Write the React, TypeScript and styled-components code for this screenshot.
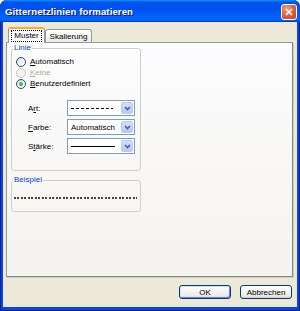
import styled, { createGlobalStyle } from "styled-components";

const GlobalStyle = createGlobalStyle`
  html, body {
    margin: 0;
    padding: 0;
    background: #ffffff;
  }
  body {
    width: 300px;
    height: 311px;
    overflow: hidden;
    font-family: "Liberation Sans", Arial, sans-serif;
    font-size: 8px;
    color: #000000;
  }
`;

const Window = styled.div`
  width: 300px;
  height: 311px;
  display: flex;
  flex-direction: column;
  background: #0a47d8;
  border-radius: 7px 7px 0 0;
  overflow: hidden;
  box-shadow: inset 1px 0 #00209c, inset -1px 0 #00209c, inset 0 -1px #00209c;
`;

const TitleBar = styled.div`
  height: 22px;
  flex: none;
  display: flex;
  align-items: center;
  justify-content: space-between;
  padding: 0 3px 0 5px;
  background: linear-gradient(
    to bottom,
    #0997ff 0%,
    #0053ee 10%,
    #0050ee 40%,
    #0066ff 86%,
    #0066ff 91%,
    #005bff 94%,
    #003dd7 97%,
    #003dd7 100%
  );
`;

const Title = styled.span`
  color: #ffffff;
  font-weight: bold;
  font-size: 9.6px;
  text-shadow: 1px 1px #0f1089;
  letter-spacing: 0.1px;
`;

const CloseButton = styled.div`
  width: 14px;
  height: 14px;
  margin-top: 1px;
  border: 1px solid #ffffff;
  border-radius: 3px;
  display: flex;
  align-items: center;
  justify-content: center;
  background: radial-gradient(circle at 35% 30%, #f0a48c 0%, #e0673f 45%, #c2401f 100%);
`;

const Body = styled.div`
  flex: 1;
  margin: 0 3px 4px 3px;
  padding: 5px 4px 0 3px;
  background: #ece9d8;
  display: flex;
  flex-direction: column;
`;

const TabStrip = styled.div`
  height: 16px;
  display: flex;
  align-items: flex-end;
  padding-left: 2px;
  margin-bottom: -1px;
  position: relative;
  z-index: 1;
`;

const Tab = styled.div<{ $active?: boolean }>`
  box-sizing: border-box;
  height: ${(p) => (p.$active ? "16px" : "13px")};
  width: ${(p) => (p.$active ? "37px" : "47px")};
  margin-bottom: ${(p) => (p.$active ? "0" : "1px")};
  margin-left: ${(p) => (p.$active ? "0" : "0")};
  border: 1px solid #919b9c;
  border-bottom: none;
  border-top: ${(p) => (p.$active ? "2px solid #f7a935" : "1px solid #919b9c")};
  border-radius: 3px 3px 0 0;
  background: ${(p) =>
    p.$active ? "#fcfcfe" : "linear-gradient(to bottom, #ffffff, #eceae3)"};
  display: flex;
  align-items: center;
  justify-content: center;
  padding-bottom: ${(p) => (p.$active ? "1px" : "0")};
`;

const FocusText = styled.span`
  outline: 1px dotted #000000;
  outline-offset: 1px;
  padding: 0 1px;
  line-height: 8px;
`;

const Panel = styled.div`
  box-sizing: border-box;
  height: 235px;
  border: 1px solid #919b9c;
  border-right-color: #7f8a8b;
  border-bottom-color: #7f8a8b;
  box-shadow: 1px 1px 0 #d0cec0;
  background: linear-gradient(to bottom, #fcfcfe, #f4f3ee);
  padding: 0 4px;
  display: flex;
  flex-direction: column;
`;

const Group = styled.fieldset<{ $gap?: number }>`
  box-sizing: border-box;
  width: 130px;
  margin: ${(p) => p.$gap ?? 0}px 0 0 0;
  padding: 0 1px;
  border: 1px solid #d0d0bf;
  border-radius: 3px;
  min-width: 0;
`;

const Legend = styled.legend`
  color: #0046d5;
  padding: 0 1px;
  line-height: 10px;
  font-size: 8px;
`;

const RadioList = styled.div`
  display: flex;
  flex-direction: column;
  padding: 3px 0 0 3px;
`;

const RadioRow = styled.div<{ $disabled?: boolean }>`
  height: 11px;
  display: flex;
  align-items: center;
  gap: 4px;
  color: ${(p) => (p.$disabled ? "#aca899" : "#000000")};
`;

const RadioCircle = styled.span<{ $checked?: boolean; $disabled?: boolean }>`
  box-sizing: border-box;
  width: 10px;
  height: 10px;
  border-radius: 50%;
  border: 1px solid ${(p) => (p.$disabled ? "#cac8bb" : "#1c5180")};
  background: ${(p) =>
    p.$disabled
      ? "#f4f3ee"
      : "linear-gradient(135deg, #dcd9ce 0%, #f4f3ee 50%, #ffffff 100%)"};
  display: flex;
  align-items: center;
  justify-content: center;

  &::after {
    content: "";
    display: ${(p) => (p.$checked ? "block" : "none")};
    width: 4px;
    height: 4px;
    border-radius: 50%;
    background: radial-gradient(circle at 40% 40%, #55d155, #1e8f1e);
  }
`;

const Fields = styled.div`
  display: flex;
  flex-direction: column;
  gap: 3px;
  padding: 11px 0 16px 15px;
`;

const FieldRow = styled.div`
  height: 16px;
  display: flex;
  align-items: center;
`;

const FieldLabel = styled.span`
  width: 39px;
`;

const Combo = styled.div`
  box-sizing: border-box;
  width: 68px;
  height: 16px;
  border: 1px solid #7f9db9;
  background: #ffffff;
  display: flex;
  align-items: stretch;
`;

const ComboValue = styled.div`
  flex: 1;
  display: flex;
  align-items: center;
  padding: 0 3px;
  overflow: hidden;
  white-space: nowrap;
`;

const ComboButton = styled.div`
  width: 12px;
  margin: 1px;
  border: 1px solid #bccbf3;
  border-radius: 2px;
  box-sizing: border-box;
  background: linear-gradient(to bottom, #d2defb, #b5c9f7);
  display: flex;
  align-items: center;
  justify-content: center;
`;

const LineSample = styled.div<{ $kind: "dash" | "solid" }>`
  width: ${(p) => (p.$kind === "dash" ? "42px" : "44px")};
  height: 1px;
  background: ${(p) =>
    p.$kind === "dash"
      ? "repeating-linear-gradient(to right, #000 0 3px, transparent 3px 5px)"
      : "#000000"};
`;

const DottedSample = styled.div`
  height: 2px;
  margin: 12px 2px 12px 1px;
  background: repeating-linear-gradient(to right, #444444 0 2px, transparent 2px 3.5px);
`;

const ButtonRow = styled.div`
  display: flex;
  justify-content: flex-end;
  gap: 9px;
  margin-top: 8px;
  padding-right: 1px;
`;

const Button = styled.div<{ $default?: boolean }>`
  box-sizing: border-box;
  width: 52px;
  height: 14px;
  border: 1px solid #003c74;
  border-radius: 3px;
  background: linear-gradient(to bottom, #ffffff, #ecebe6 80%, #d6d0c5);
  box-shadow: ${(p) =>
    p.$default ? "inset -1px -1px #6982ee, inset 1px 1px #cee7ff" : "none"};
  display: flex;
  align-items: center;
  justify-content: center;
  font-size: 8px;
`;

const Chevron = () => (
  <svg width="7" height="5" viewBox="0 0 7 5">
    <path d="M1 1 L3.5 3.5 L6 1" fill="none" stroke="#4d6185" strokeWidth="1.6" />
  </svg>
);

const CloseX = () => (
  <svg width="8" height="8" viewBox="0 0 8 8">
    <path d="M1 1 L7 7 M7 1 L1 7" stroke="#ffffff" strokeWidth="1.6" />
  </svg>
);

type RadioItem = { label: React.ReactNode; checked?: boolean; disabled?: boolean };

const radios: RadioItem[] = [
  { label: <><u>A</u>utomatisch</> },
  { label: <><u>K</u>eine</>, disabled: true },
  { label: <><u>B</u>enutzerdefiniert</>, checked: true },
];

const App = () => {
  return (
    <>
      <GlobalStyle />
      <Window>
        <TitleBar>
          <Title>Gitternetzlinien formatieren</Title>
          <CloseButton>
            <CloseX />
          </CloseButton>
        </TitleBar>
        <Body>
          <TabStrip>
            <Tab $active>
              <FocusText>Muster</FocusText>
            </Tab>
            <Tab>Skalierung</Tab>
          </TabStrip>
          <Panel>
            <Group>
              <Legend>Linie</Legend>
              <RadioList>
                {radios.map((r, i) => (
                  <RadioRow key={i} $disabled={r.disabled}>
                    <RadioCircle $checked={r.checked} $disabled={r.disabled} />
                    <span>{r.label}</span>
                  </RadioRow>
                ))}
              </RadioList>
              <Fields>
                <FieldRow>
                  <FieldLabel>
                    A<u>r</u>t:
                  </FieldLabel>
                  <Combo>
                    <ComboValue>
                      <LineSample $kind="dash" />
                    </ComboValue>
                    <ComboButton>
                      <Chevron />
                    </ComboButton>
                  </Combo>
                </FieldRow>
                <FieldRow>
                  <FieldLabel>
                    <u>F</u>arbe:
                  </FieldLabel>
                  <Combo>
                    <ComboValue>Automatisch</ComboValue>
                    <ComboButton>
                      <Chevron />
                    </ComboButton>
                  </Combo>
                </FieldRow>
                <FieldRow>
                  <FieldLabel>
                    S<u>t</u>ärke:
                  </FieldLabel>
                  <Combo>
                    <ComboValue>
                      <LineSample $kind="solid" />
                    </ComboValue>
                    <ComboButton>
                      <Chevron />
                    </ComboButton>
                  </Combo>
                </FieldRow>
              </Fields>
            </Group>
            <Group $gap={4}>
              <Legend>Beispiel</Legend>
              <DottedSample />
            </Group>
          </Panel>
          <ButtonRow>
            <Button $default>OK</Button>
            <Button>Abbrechen</Button>
          </ButtonRow>
        </Body>
      </Window>
    </>
  );
};

export default App;
